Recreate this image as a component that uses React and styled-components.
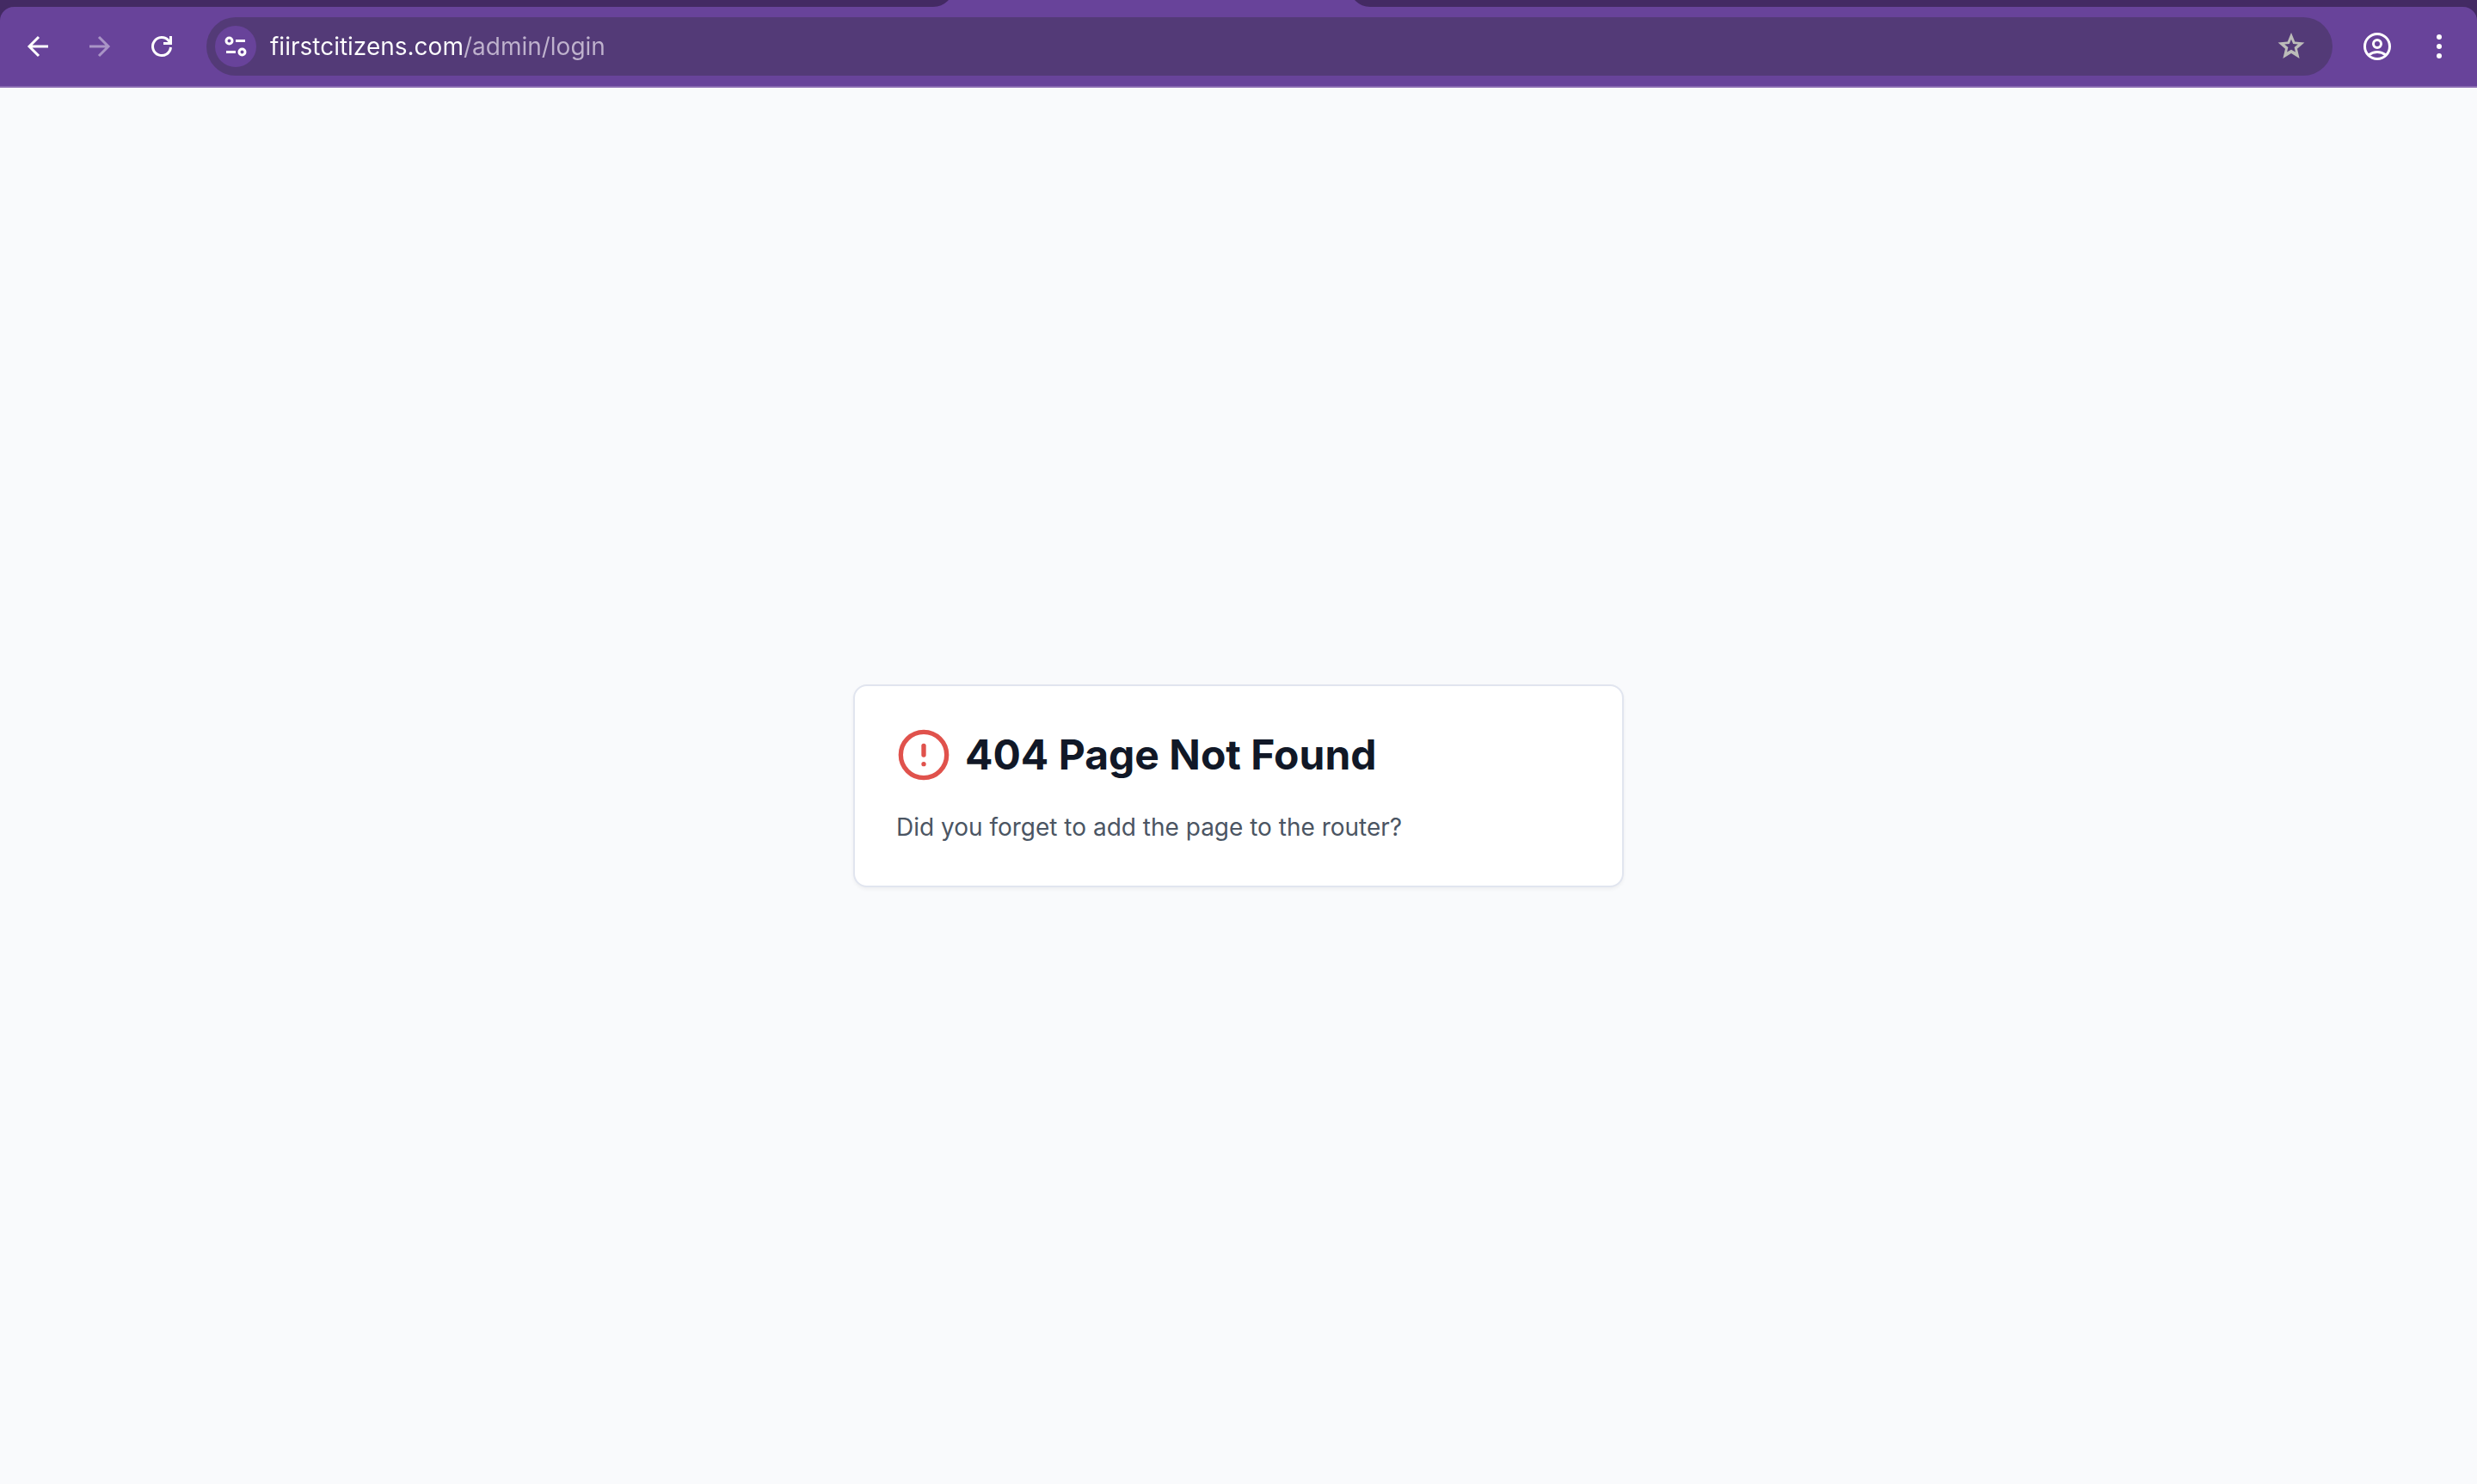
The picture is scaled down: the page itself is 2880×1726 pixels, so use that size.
import React, { useState } from "react";
import styled, { createGlobalStyle } from "styled-components";
import { CircleAlert } from "lucide-react";

const GlobalStyle = createGlobalStyle`
  *, *::before, *::after { box-sizing: border-box; }
  body {
    margin: 0;
    background: #f9fafc;
    font-family: Inter, "Liberation Sans", sans-serif;
  }
  h1, p { margin: 0; }
`;

const Window = styled.div`
  display: flex;
  flex-direction: column;
  min-height: 100vh;
`;

const Chrome = styled.header`
  background: #432a63;
`;

const TabStrip = styled.div`
  display: flex;
  height: 8px;
  overflow: hidden;
  background: #68439a;
`;

const TabGap = styled.div`
  flex: ${(p) => p.$grow};
  display: flex;
  align-items: flex-end;
  &::before {
    content: "";
    flex: 1;
    height: 48px;
    background: #432a63;
    border-radius: ${(p) => (p.$side === "left" ? "0 0 24px 0" : "0 0 0 24px")};
  }
`;

const ActiveTab = styled.div`
  width: 460px;
`;

const Toolbar = styled.nav`
  display: flex;
  align-items: center;
  gap: 18px;
  padding: 12px 10px;
  background: #68439a;
  border-bottom: 2px solid #8a6bb1;
  border-radius: 16px 16px 0 0;
`;

const Group = styled.div`
  display: flex;
  gap: 4px;
`;

const IconButton = styled.button`
  display: grid;
  place-items: center;
  flex: none;
  width: ${(p) => p.$size || 68}px;
  height: ${(p) => p.$size || 68}px;
  padding: 0;
  border: 0;
  border-radius: 50%;
  background: ${(p) => p.$fill || "transparent"};
  color: ${(p) => p.$color || "#ffffff"};
`;

const AddressBar = styled.form`
  display: flex;
  align-items: center;
  gap: 16px;
  flex: 1;
  height: 68px;
  padding: 0 24px 0 10px;
  border-radius: 34px;
  background: #533a77;
`;

const Address = styled.input`
  flex: 1;
  min-width: 0;
  height: 40px;
  padding: 0;
  border: 0;
  outline: 0;
  font: 400 28px/40px Inter, "Liberation Sans", sans-serif;
  color: #ffffff;
  background: linear-gradient(90deg, #ffffff 224px, #bfb2cd 224px);
  background-clip: text;
  -webkit-background-clip: text;
  -webkit-text-fill-color: transparent;
`;

const Page = styled.main`
  flex: 1;
  display: flex;
  align-items: center;
  justify-content: center;
  background: #f9fafc;
`;

const Card = styled.section`
  display: flex;
  flex-direction: column;
  gap: 32px;
  width: 100%;
  max-width: 896px;
  margin: 0 32px;
  padding: 48px;
  border: 2px solid #e1e5ef;
  border-radius: 16px;
  background: #ffffff;
  box-shadow: 0 2px 4px rgba(0, 0, 0, 0.05);
`;

const CardHeader = styled.div`
  display: flex;
  align-items: center;
  gap: 16px;
`;

const Title = styled.h1`
  font-size: 48px;
  line-height: 64px;
  font-weight: 700;
  color: #111827;
`;

const Message = styled.p`
  font-size: 28px;
  line-height: 40px;
  color: #4b5563;
`;

const Svg = ({ size, children }) => (
  <svg width={size} height={size} viewBox={`0 0 ${size} ${size}`} fill="none" aria-hidden="true">
    {children}
  </svg>
);

const BackIcon = () => (
  <Svg size={36}>
    <path d="M30 18H8.5M19 7 8 18l11 11" stroke="currentColor" strokeWidth="3" />
  </Svg>
);

const ForwardIcon = () => (
  <Svg size={36}>
    <path d="M6 18h21.5M17 7l11 11-11 11" stroke="currentColor" strokeWidth="3" />
  </Svg>
);

const ReloadIcon = () => (
  <Svg size={36}>
    <path d="M28.5 19A10.5 10.5 0 1 1 26 11.200L28 14" stroke="currentColor" strokeWidth="3" />
    <path d="M27 6h3v10H20v-3h7z" fill="currentColor" />
  </Svg>
);

const TuneIcon = () => (
  <Svg size={36}>
    <g stroke="currentColor" strokeWidth="3">
      <circle cx="10.5" cy="11.5" r="3.5" />
      <circle cx="25.5" cy="24.5" r="3.5" />
      <path d="M18 11.5h11M7 24.5h11" />
    </g>
  </Svg>
);

const StarIcon = () => (
  <Svg size={36}>
    <path
      fill="currentColor"
      fillRule="evenodd"
      d="M18 2l4.3 10.4 11.1 1-8.4 7.3L27.6 32 18 26.1 8.400 32 11 20.7l-8.4-7.3 11.1-1zM18 9.7l-2.2 5.2-5.6.5 4.2 3.7-1.3 5.5L18 21.7l4.9 2.9-1.3-5.5 4.2-3.7-5.6-.5z"
    />
  </Svg>
);

const ProfileIcon = () => (
  <Svg size={36}>
    <g stroke="currentColor" strokeWidth="3">
      <circle cx="18" cy="18" r="14.5" />
      <circle cx="18" cy="15" r="4.5" />
      <path d="M8 28c3-2.3 6-3.5 10-3.5s7 1.2 10 3.5" />
    </g>
  </Svg>
);

const MenuIcon = () => (
  <Svg size={36}>
    <g fill="currentColor">
      <circle cx="18" cy="7" r="3" />
      <circle cx="18" cy="18" r="3" />
      <circle cx="18" cy="29" r="3" />
    </g>
  </Svg>
);

export default function App() {
  const [url, setUrl] = useState("fiirstcitizens.com/admin/login");
  return (
    <Window>
      <GlobalStyle />
      <Chrome>
        <TabStrip>
          <TabGap $grow={11} $side="left" />
          <ActiveTab />
          <TabGap $grow={13} $side="right" />
        </TabStrip>
        <Toolbar aria-label="Browser toolbar">
          <Group>
            <IconButton type="button" aria-label="Back"><BackIcon /></IconButton>
            <IconButton type="button" aria-label="Forward" $color="#a994c6"><ForwardIcon /></IconButton>
            <IconButton type="button" aria-label="Reload"><ReloadIcon /></IconButton>
          </Group>
          <AddressBar onSubmit={(e) => e.preventDefault()}>
            <IconButton type="button" aria-label="Site information" $size={48} $fill="#68439a">
              <TuneIcon />
            </IconButton>
            <Address
              aria-label="Address"
              spellCheck={false}
              value={url}
              onChange={(e) => setUrl(e.target.value)}
            />
            <IconButton type="button" aria-label="Bookmark" $size={48} $color="#bcbcb9">
              <StarIcon />
            </IconButton>
          </AddressBar>
          <Group>
            <IconButton type="button" aria-label="Profile"><ProfileIcon /></IconButton>
            <IconButton type="button" aria-label="Menu"><MenuIcon /></IconButton>
          </Group>
        </Toolbar>
      </Chrome>
      <Page>
        <Card>
          <CardHeader>
            <CircleAlert size={64} color="#e0524c" aria-hidden="true" />
            <Title>404 Page Not Found</Title>
          </CardHeader>
          <Message>Did you forget to add the page to the router?</Message>
        </Card>
      </Page>
    </Window>
  );
}
